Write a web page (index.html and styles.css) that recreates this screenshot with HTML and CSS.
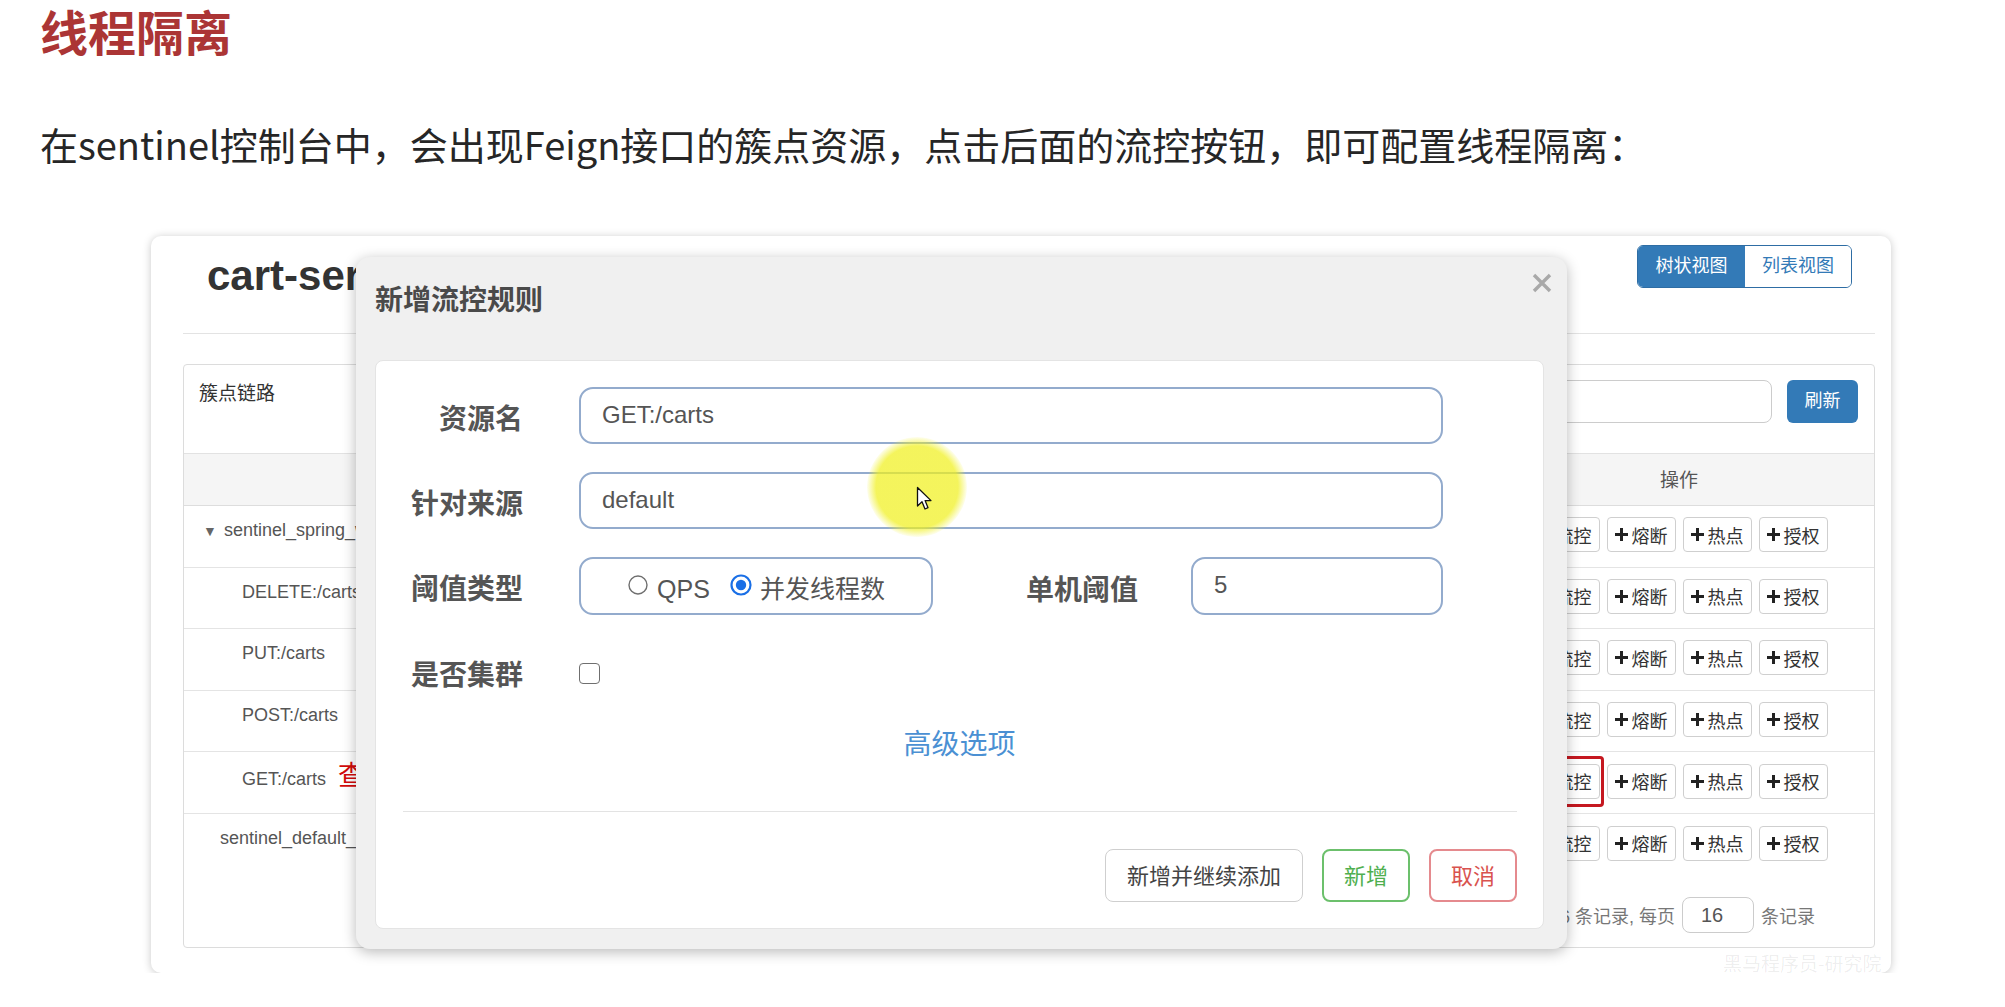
FILE: index.html
```html
<!DOCTYPE html>
<html lang="zh-CN">
<head>
<meta charset="utf-8">
<title>线程隔离</title>
<link rel="stylesheet" href="styles.css">
</head>
<body>
<div class="doc">
  <h1 class="title">线程隔离</h1>
  <p class="lead">在sentinel控制台中，会出现Feign接口的簇点资源，点击后面的流控按钮，即可配置线程隔离：</p>

  <div class="shot">
    <div class="shot-head">
      <h2 class="app">cart-service</h2>
      <div class="seg"><span class="seg-item seg-on">树状视图</span><span class="seg-item">列表视图</span></div>
    </div>

    <div class="panel">
      <div class="panel-head">
        <span class="panel-title">簇点链路</span>
        <div class="search"></div>
        <span class="btn-blue">刷新</span>
      </div>
      <div class="thead"><span></span><span class="th-op">操作</span></div>

      <div class="row">
        <div class="name lvl0"><span class="caret">▼</span>sentinel_spring_web_context</div>
        <div class="ops">
          <span class="op"><svg class="plus" viewBox="0 0 13 13"><path d="M5 0h3v5h5v3H8v5H5V8H0V5h5z"/></svg>流控</span>
          <span class="op"><svg class="plus" viewBox="0 0 13 13"><path d="M5 0h3v5h5v3H8v5H5V8H0V5h5z"/></svg>熔断</span>
          <span class="op"><svg class="plus" viewBox="0 0 13 13"><path d="M5 0h3v5h5v3H8v5H5V8H0V5h5z"/></svg>热点</span>
          <span class="op"><svg class="plus" viewBox="0 0 13 13"><path d="M5 0h3v5h5v3H8v5H5V8H0V5h5z"/></svg>授权</span>
        </div>
      </div>
      <div class="row">
        <div class="name lvl1">DELETE:/carts</div>
        <div class="ops">
          <span class="op"><svg class="plus" viewBox="0 0 13 13"><path d="M5 0h3v5h5v3H8v5H5V8H0V5h5z"/></svg>流控</span>
          <span class="op"><svg class="plus" viewBox="0 0 13 13"><path d="M5 0h3v5h5v3H8v5H5V8H0V5h5z"/></svg>熔断</span>
          <span class="op"><svg class="plus" viewBox="0 0 13 13"><path d="M5 0h3v5h5v3H8v5H5V8H0V5h5z"/></svg>热点</span>
          <span class="op"><svg class="plus" viewBox="0 0 13 13"><path d="M5 0h3v5h5v3H8v5H5V8H0V5h5z"/></svg>授权</span>
        </div>
      </div>
      <div class="row">
        <div class="name lvl1">PUT:/carts</div>
        <div class="ops">
          <span class="op"><svg class="plus" viewBox="0 0 13 13"><path d="M5 0h3v5h5v3H8v5H5V8H0V5h5z"/></svg>流控</span>
          <span class="op"><svg class="plus" viewBox="0 0 13 13"><path d="M5 0h3v5h5v3H8v5H5V8H0V5h5z"/></svg>熔断</span>
          <span class="op"><svg class="plus" viewBox="0 0 13 13"><path d="M5 0h3v5h5v3H8v5H5V8H0V5h5z"/></svg>热点</span>
          <span class="op"><svg class="plus" viewBox="0 0 13 13"><path d="M5 0h3v5h5v3H8v5H5V8H0V5h5z"/></svg>授权</span>
        </div>
      </div>
      <div class="row">
        <div class="name lvl1">POST:/carts</div>
        <div class="ops">
          <span class="op"><svg class="plus" viewBox="0 0 13 13"><path d="M5 0h3v5h5v3H8v5H5V8H0V5h5z"/></svg>流控</span>
          <span class="op"><svg class="plus" viewBox="0 0 13 13"><path d="M5 0h3v5h5v3H8v5H5V8H0V5h5z"/></svg>熔断</span>
          <span class="op"><svg class="plus" viewBox="0 0 13 13"><path d="M5 0h3v5h5v3H8v5H5V8H0V5h5z"/></svg>热点</span>
          <span class="op"><svg class="plus" viewBox="0 0 13 13"><path d="M5 0h3v5h5v3H8v5H5V8H0V5h5z"/></svg>授权</span>
        </div>
      </div>
      <div class="row">
        <div class="name lvl1">GET:/carts<span class="note">查询购物车</span></div>
        <div class="ops">
          <span class="op op-mark"><svg class="plus" viewBox="0 0 13 13"><path d="M5 0h3v5h5v3H8v5H5V8H0V5h5z"/></svg>流控</span>
          <span class="op"><svg class="plus" viewBox="0 0 13 13"><path d="M5 0h3v5h5v3H8v5H5V8H0V5h5z"/></svg>熔断</span>
          <span class="op"><svg class="plus" viewBox="0 0 13 13"><path d="M5 0h3v5h5v3H8v5H5V8H0V5h5z"/></svg>热点</span>
          <span class="op"><svg class="plus" viewBox="0 0 13 13"><path d="M5 0h3v5h5v3H8v5H5V8H0V5h5z"/></svg>授权</span>
        </div>
      </div>
      <div class="row row-last">
        <div class="name lvl-mid">sentinel_default_context</div>
        <div class="ops">
          <span class="op"><svg class="plus" viewBox="0 0 13 13"><path d="M5 0h3v5h5v3H8v5H5V8H0V5h5z"/></svg>流控</span>
          <span class="op"><svg class="plus" viewBox="0 0 13 13"><path d="M5 0h3v5h5v3H8v5H5V8H0V5h5z"/></svg>熔断</span>
          <span class="op"><svg class="plus" viewBox="0 0 13 13"><path d="M5 0h3v5h5v3H8v5H5V8H0V5h5z"/></svg>热点</span>
          <span class="op"><svg class="plus" viewBox="0 0 13 13"><path d="M5 0h3v5h5v3H8v5H5V8H0V5h5z"/></svg>授权</span>
        </div>
      </div>

      <div class="pager">
        <span>共 16 条记录, 每页</span>
        <span class="pager-input">16</span>
        <span>条记录</span>
      </div>
    </div>

    <div class="watermark">黑马程序员-研究院</div>

    <div class="modal">
      <div class="modal-head">
        <span class="modal-title">新增流控规则</span>
      </div>
      <svg class="close" viewBox="0 0 20 20"><path d="M2 2L18 18M18 2L2 18"/></svg>
      <div class="modal-body">
        <div class="form">
          <label class="lbl">资源名</label>
          <div class="field">GET:/carts</div>

          <label class="lbl">针对来源</label>
          <div class="field">default</div>

          <label class="lbl">阈值类型</label>
          <div class="line">
            <div class="radios">
              <svg class="radio" viewBox="0 0 22 22"><circle cx="11" cy="11" r="9" fill="#fff" stroke="#6f6f6f" stroke-width="1.4"/></svg>
              <span class="rtext">QPS</span>
              <svg class="radio radio-on" viewBox="0 0 22 22"><circle cx="11" cy="11" r="9.5" fill="#fff" stroke="#1a6fe6" stroke-width="2.2"/><circle cx="11" cy="11" r="5.2" fill="#1a6fe6"/></svg>
              <span class="rtext">并发线程数</span>
            </div>
            <label class="lbl lbl-inline">单机阈值</label>
            <div class="field field-sm">5</div>
          </div>

          <label class="lbl">是否集群</label>
          <div class="check-wrap"><span class="check"></span></div>
        </div>

        <div class="adv">高级选项</div>
        <div class="divider"></div>
        <div class="actions">
          <span class="abtn">新增并继续添加</span>
          <span class="abtn abtn-ok">新增</span>
          <span class="abtn abtn-cancel">取消</span>
        </div>
      </div>
    </div>

    <div class="spot"></div>
    <svg class="cursor" viewBox="0 0 17 26"><path d="M1.5 1.5 L1.5 20 L6 15.8 L9 23 L12 21.7 L9.1 14.6 L15 14.6 Z"/></svg>
  </div>
</div>
</body>
</html>
```

FILE: styles.css
```css
* { box-sizing: border-box; }

body {
  margin: 0;
  background: #fff;
  font-family: "Noto Sans CJK SC", sans-serif;
}

.doc {
  padding: 0 0 0 40px;
}

.title {
  margin: 0;
  font-size: 48px;
  line-height: 60px;
  font-weight: 700;
  color: #ab3535;
}

.lead {
  margin: 56px 0 0;
  font-size: 38px;
  line-height: 56px;
  font-weight: 400;
  color: #262626;
  white-space: nowrap;
}

/* ---------- embedded sentinel screenshot ---------- */
.shot {
  position: relative;
  margin: 64px 0 0 111px;
  width: 1740px;
  height: 737px;
  background: #fff;
  border-radius: 10px;
  box-shadow: 0 1px 9px rgba(0, 0, 0, 0.22);
  padding: 0 16px 25px 32px;
  font-family: "Liberation Sans", "Noto Sans CJK SC", sans-serif;
  color: #555;
}

.shot-head {
  display: flex;
  justify-content: space-between;
  align-items: flex-start;
  height: 98px;
  border-bottom: 1px solid #e3e3e3;
}

.app {
  margin: 19px 0 0 24px;
  width: 149px;
  overflow: hidden;
  white-space: nowrap;
  font-size: 42px;
  line-height: 42px;
  font-weight: 700;
  color: #333;
}

.seg {
  display: flex;
  margin: 9px 23px 0 0;
  height: 43px;
  border: 1px solid #2e6da4;
  border-radius: 6px;
  overflow: hidden;
}

.seg-item {
  width: 106px;
  line-height: 41px;
  text-align: center;
  font-size: 18px;
  color: #337ab7;
  background: #fff;
}

.seg-on {
  width: 107px;
  background: #337ab7;
  color: #fff;
}

.panel {
  margin-top: 30px;
  height: 584px;
  border: 1px solid #dcdcdc;
  border-radius: 4px;
}

.panel-head {
  display: flex;
  align-items: flex-start;
  height: 88px;
  padding: 15px 16px 0 15px;
}

.panel-title {
  font-size: 19px;
  line-height: 28px;
  color: #333;
}

.search {
  margin-left: auto;
  width: 330px;
  height: 43px;
  border: 1px solid #ccc;
  border-radius: 8px;
}

.btn-blue {
  margin-left: 15px;
  width: 71px;
  height: 43px;
  line-height: 43px;
  text-align: center;
  font-size: 18px;
  color: #fff;
  background: #337ab7;
  border-radius: 6px;
}

.thead {
  display: grid;
  grid-template-columns: 1fr 390px;
  height: 53px;
  background: #f5f5f5;
  border-top: 1px solid #e2e2e2;
  border-bottom: 1px solid #dddddd;
}

.th-op {
  text-align: center;
  font-size: 19px;
  line-height: 54px;
  color: #555;
}

.row {
  display: grid;
  grid-template-columns: 1fr 390px;
  height: 61.6px;
  border-bottom: 1px solid #e4e4e4;
}

.row-last {
  border-bottom: 0;
}

.name {
  padding-top: 12px;
  font-size: 18px;
  line-height: 24px;
  color: #555;
  white-space: nowrap;
  overflow: hidden;
}

.lvl0 { padding-left: 19px; }
.lvl1 { padding-left: 58px; }
.lvl-mid { padding-left: 36px; }

.caret {
  display: inline-block;
  width: 21px;
  font-size: 14px;
  color: #666;
}

.note {
  margin-left: 12px;
  font-size: 27px;
  line-height: 24px;
  color: #d20a0a;
}

.ops {
  display: flex;
  justify-content: center;
  align-items: center;
  gap: 7px;
  padding-bottom: 3px;
}

.op {
  position: relative;
  display: flex;
  align-items: center;
  justify-content: center;
  gap: 4px;
  width: 69px;
  height: 35px;
  border: 1px solid #cfcfcf;
  border-radius: 4px;
  background: #fff;
  font-size: 18px;
  color: #333;
}

.plus {
  width: 13px;
  height: 13px;
  fill: #222;
}

.op-mark::after {
  content: "";
  position: absolute;
  left: -5px;
  right: -5px;
  top: -9px;
  bottom: -9px;
  border: 3px solid #c51820;
  border-radius: 4px;
}

.pager {
  display: flex;
  justify-content: flex-end;
  align-items: center;
  gap: 7px;
  padding: 21px 59px 0 0;
  font-size: 18px;
  color: #777;
}

.pager-input {
  width: 72px;
  height: 36px;
  border: 1px solid #ccc;
  border-radius: 8px;
  padding-left: 18px;
  font-size: 20px;
  line-height: 34px;
  color: #555;
}

.watermark {
  position: absolute;
  left: 1572px;
  top: 713px;
  font-family: "Noto Sans CJK SC", sans-serif;
  font-size: 19px;
  line-height: 28px;
  color: rgba(0, 0, 0, 0.07);
}

/* ---------- modal ---------- */
.modal {
  position: absolute;
  left: 205px;
  top: 21px;
  width: 1211px;
  height: 692px;
  display: flex;
  flex-direction: column;
  padding: 0 23px 20px 19px;
  background: #f0f0f0;
  border-radius: 14px;
  box-shadow: 0 3px 14px rgba(0, 0, 0, 0.28);
  z-index: 2;
}

.modal-head {
  height: 103px;
  padding-top: 21px;
}

.modal-title {
  font-family: "Noto Sans CJK SC", sans-serif;
  font-size: 28px;
  line-height: 40px;
  font-weight: 700;
  color: #4a4a4a;
}

.close {
  position: absolute;
  right: 15px;
  top: 16px;
  width: 20px;
  height: 20px;
  stroke: #a9a9a9;
  stroke-width: 3.4;
  fill: none;
}

.modal-body {
  flex: 1;
  display: flex;
  flex-direction: column;
  padding: 26px 0 0;
  background: #fff;
  border: 1px solid #e4e4e4;
  border-radius: 8px;
}

.form {
  display: grid;
  grid-template-columns: 147px 864px;
  grid-template-rows: 57px 57px 58px 57px;
  column-gap: 56px;
  row-gap: 28px;
}

.lbl {
  font-family: "Noto Sans CJK SC", sans-serif;
  font-size: 28px;
  line-height: 60px;
  font-weight: 700;
  color: #555;
  text-align: right;
  white-space: nowrap;
}

.field {
  height: 57px;
  border: 2px solid #93abcd;
  border-radius: 14px;
  padding-left: 21px;
  font-size: 24px;
  line-height: 52px;
  color: #555;
}

.line {
  display: flex;
  align-items: stretch;
}

.radios {
  display: flex;
  align-items: center;
  justify-content: center;
  width: 354px;
  border: 2px solid #93abcd;
  border-radius: 14px;
  font-size: 25px;
  color: #555;
}

.radio {
  width: 22px;
  height: 22px;
  margin-top: -2px;
}

.rtext {
  margin-left: 8px;
  line-height: 54px;
  padding-top: 5px;
}

.radio-on {
  margin-left: 20px;
}

.lbl-inline {
  margin-left: 93px;
  width: 112px;
  line-height: 62px;
}

.field-sm {
  margin-left: 53px;
  width: 252px;
  height: 58px;
  padding-left: 21px;
}

.check-wrap {
  display: flex;
  align-items: center;
}

.check {
  width: 21px;
  height: 21px;
  border: 1.5px solid #6f6f6f;
  border-radius: 4px;
  background: #fff;
  margin-top: 4px;
}

.adv {
  margin-top: 22px;
  text-align: center;
  font-family: "Noto Sans CJK SC", sans-serif;
  font-size: 28px;
  line-height: 40px;
  color: #4b90d3;
}

.divider {
  margin: 49px 26px 0 27px;
  border-top: 1px solid #e3e3e3;
}

.actions {
  display: flex;
  justify-content: flex-end;
  gap: 19px;
  margin-top: 37px;
  padding-right: 26px;
}

.abtn {
  height: 53px;
  padding: 0 21px;
  border: 1px solid #cfcfcf;
  border-radius: 8px;
  font-family: "Noto Sans CJK SC", sans-serif;
  font-size: 22px;
  line-height: 48px;
  color: #444;
  background: #fff;
}

.abtn-ok {
  width: 88px;
  text-align: center;
  padding: 0;
  border: 2px solid #6cc06c;
  color: #4faf4f;
  line-height: 46px;
}

.abtn-cancel {
  width: 88px;
  text-align: center;
  padding: 0;
  border: 2px solid #e58a8e;
  color: #d9534f;
  line-height: 46px;
}

/* cursor highlight overlay */
.spot {
  position: absolute;
  left: 716px;
  top: 201px;
  width: 100px;
  height: 100px;
  border-radius: 50%;
  background: radial-gradient(circle, rgba(240, 240, 30, 0.72) 0, rgba(240, 240, 30, 0.72) 58%, rgba(240, 240, 30, 0) 72%);
  z-index: 3;
}

.cursor {
  position: absolute;
  left: 765px;
  top: 250px;
  width: 17px;
  height: 26px;
  fill: #fff;
  stroke: #111;
  stroke-width: 1.3;
  stroke-linejoin: round;
  z-index: 4;
}
```
